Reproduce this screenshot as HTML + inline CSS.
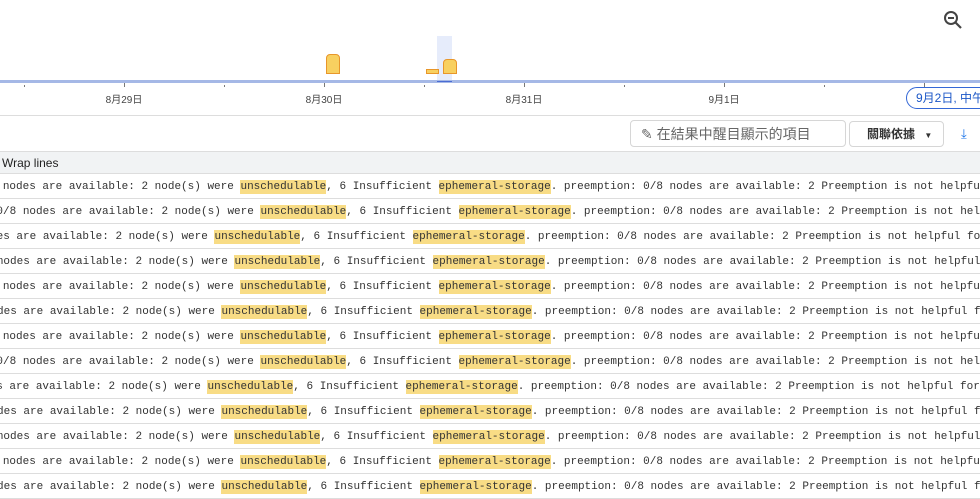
<!DOCTYPE html>
<html><head><meta charset="utf-8"><style>
body{margin:0;width:980px;height:498px;overflow:hidden;background:#fff;font-family:"Liberation Sans","Noto Sans CJK TC",sans-serif;position:relative}
.a{position:absolute}
.tick{position:absolute;width:1px;background:#777}
.lbl{position:absolute;top:91px;font-size:10px;color:#444;width:60px;text-align:center}
.row{position:absolute;left:0;width:980px;height:24px;border-bottom:1px solid #ddd;overflow:hidden}
.row span.t{position:absolute;top:6px;white-space:pre;font-family:"Liberation Mono",monospace;font-size:11px;color:#333;line-height:14px}
mark{background:#f8dc85;color:#333;padding:1px 0}
</style></head><body>
<svg class="a" style="left:942px;top:9px" width="22" height="22" viewBox="0 0 22 22"><circle cx="9" cy="9" r="6" fill="none" stroke="#444" stroke-width="2"/><line x1="6" y1="9" x2="12" y2="9" stroke="#444" stroke-width="2"/><line x1="13.5" y1="13.5" x2="19" y2="19" stroke="#444" stroke-width="2.2"/></svg>
<div class="a" style="left:437px;top:36px;width:15px;height:46px;background:#e6ecfb"></div>
<div class="a" style="left:326px;top:54px;width:12px;height:18px;background:#f8d060;border:1px solid #e8962a;border-radius:4px 4px 0 0"></div>
<div class="a" style="left:426px;top:69px;width:11px;height:3px;background:#f8d060;border:1px solid #e8962a"></div>
<div class="a" style="left:443px;top:59px;width:12px;height:13px;background:#f8d060;border:1px solid #e8962a;border-radius:4px 4px 0 0"></div>
<div class="a" style="left:0;top:80px;width:980px;height:3px;background:#a5b8e6"></div>
<div class="a" style="left:437px;top:81px;width:15px;height:1px;background:#4a6cd4"></div>
<div class="tick" style="left:124px;top:83px;height:4px"></div><div class="tick" style="left:324px;top:83px;height:4px"></div><div class="tick" style="left:524px;top:83px;height:4px"></div><div class="tick" style="left:724px;top:83px;height:4px"></div><div class="tick" style="left:924px;top:83px;height:4px"></div>
<div class="tick" style="left:24px;top:85px;height:2px"></div><div class="tick" style="left:224px;top:85px;height:2px"></div><div class="tick" style="left:424px;top:85px;height:2px"></div><div class="tick" style="left:624px;top:85px;height:2px"></div><div class="tick" style="left:824px;top:85px;height:2px"></div>
<div class="lbl" style="left:94px">8月29日</div><div class="lbl" style="left:294px">8月30日</div><div class="lbl" style="left:494px">8月31日</div><div class="lbl" style="left:694px">9月1日</div>
<div class="a" style="left:906px;top:87px;width:90px;height:20px;border:1px solid #3367d6;border-radius:11px;color:#1a56c7;font-size:12px;line-height:20px;padding-left:9px;white-space:nowrap">9月2日, 中午</div>
<div class="a" style="left:0;top:115px;width:980px;height:1px;background:#ddd"></div>
<div class="a" style="left:630px;top:120px;height:27px;border:1px solid #d6d6d6;border-radius:4px;font-size:14px;color:#666;line-height:27px;padding-left:10px;box-sizing:border-box;width:216px">✎ 在結果中醒目顯示的項目</div>
<div class="a" style="left:849px;top:121px;width:95px;height:26px;border:1px solid #d6d6d6;border-radius:4px;box-sizing:border-box;font-size:12px;font-weight:bold;color:#333;line-height:24px;padding-left:17px">關聯依據 <span style="font-size:8px;margin-left:6px">▼</span></div>
<div class="a" style="left:961px;top:126px;color:#1a73e8;font-size:13px">⤓</div>
<div class="a" style="left:0;top:151px;width:980px;height:23px;background:#f1f3f4;border-top:1px solid #ddd;border-bottom:1px solid #ddd;box-sizing:border-box;font-size:12px;color:#222;line-height:22px;padding-left:2px">Wrap lines</div>
<div id="rows"></div>
<script>
var xs=[240,260,214,234,240,221,240,260,207,221,234,240,221];
var s='0: 0/8 nodes are available: 2 node(s) were <mark>unschedulable</mark>, 6 Insufficient <mark>ephemeral-storage</mark>. preemption: 0/8 nodes are available: 2 Preemption is not helpful for scheduling.';
var h='';
for(var i=0;i<13;i++){h+='<div class="row" style="top:'+(174+25*i)+'px"><span class="t" style="left:'+(xs[i]-44*6.6+7)+'px">'+s+'</span></div>';}
document.getElementById('rows').innerHTML=h;
</script>
</body></html>
